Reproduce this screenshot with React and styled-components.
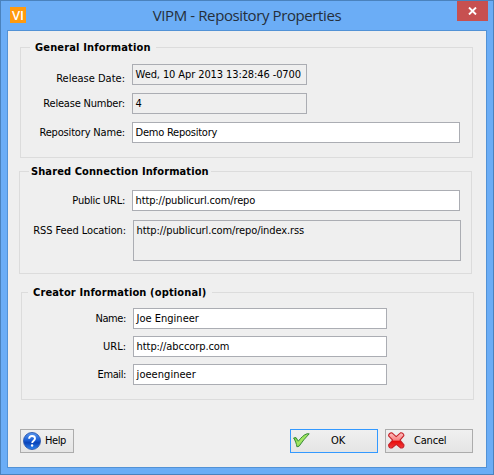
import React from "react";
import styled, { createGlobalStyle } from "styled-components";

const GlobalStyle = createGlobalStyle`
  * { box-sizing: border-box; }
  body { margin: 0; overflow: hidden; }
`;

const Window = styled.div`
  width: 494px;
  height: 475px;
  display: flex;
  flex-direction: column;
  padding: 0 6px 6px;
  background: #6badf6;
  border: 1px solid #4a82bd;
  color: #000;
  font: 11px/13px "DejaVu Sans Condensed", "DejaVu Sans", sans-serif;
  font-stretch: condensed;
`;

const TitleBar = styled.header`
  height: 29px;
  flex: none;
  display: flex;
  align-items: flex-start;
  justify-content: space-between;
`;

const AppBadge = styled.div`
  width: 16px;
  height: 16px;
  margin: 6px 0 0 3px;
  background: #ff9a0e;
  color: #fff;
  font: 600 13px/17px "Open Sans", sans-serif;
  text-align: center;
`;

const Title = styled.h1`
  margin: 4px 0 0 11px;
  color: #252f3b;
  font: 400 15px/21px "Open Sans", sans-serif;
  letter-spacing: ${(p) => p.$spacing}px;
  white-space: nowrap;
`;

const CloseButton = styled.button`
  width: 31px;
  height: 20px;
  margin-right: -1px;
  padding: 0;
  border: 0;
  background: #c75050;
  display: flex;
  align-items: center;
  justify-content: center;
`;

const Client = styled.main`
  flex: 1;
  display: flex;
  flex-direction: column;
  align-items: flex-start;
  border: 1px solid #5292d6;
  background: #efefef;
  padding: 16px 0 0 11px;
`;

const Group = styled.section`
  flex: none;
  width: 453px;
  height: ${(p) => p.$height}px;
  margin: ${(p) => p.$top}px 0 0 ${(p) => p.$left}px;
  border: 1px solid #dcdcdc;
`;

const Legend = styled.h2`
  width: ${(p) => p.$width}px;
  height: 14px;
  margin: -7px 0 0 ${(p) => p.$left}px;
  padding-left: ${(p) => p.$indent}px;
  background: #efefef;
  font: bold 11px/14px "DejaVu Sans Condensed", "DejaVu Sans", sans-serif;
  font-stretch: condensed;
  letter-spacing: ${(p) => p.$spacing || 0}px;
  white-space: nowrap;
`;

const Row = styled.div`
  display: flex;
  margin-top: ${(p) => p.$top}px;
`;

const Label = styled.label`
  width: ${(p) => p.$width}px;
  flex: none;
  padding: ${(p) => p.$drop || 4}px 1px 0 0;
  margin-right: 6px;
  text-align: right;
  letter-spacing: ${(p) => p.$spacing || 0}px;
  white-space: nowrap;
`;

const Field = styled.div`
  width: ${(p) => p.$width}px;
  height: ${(p) => p.$height || 21}px;
  padding: 3px 2px 3px 2.6px;
  border: 1px solid #abadb3;
  background: ${(p) => (p.$readOnly ? "#efefef" : "#fff")};
  letter-spacing: ${(p) => p.$spacing || 0}px;
  white-space: nowrap;
`;

const Footer = styled.footer`
  width: 453px;
  margin: 29px 0 0 1px;
  display: flex;
  gap: 7px;
`;

const Button = styled.button`
  width: ${(p) => p.$width}px;
  height: 24px;
  margin-right: ${(p) => p.$after || 0}px;
  padding: 0 0 1px 2px;
  display: flex;
  align-items: center;
  border: 1px solid ${(p) => (p.$primary ? "#3399ff" : "#acacac")};
  background: linear-gradient(#f0f0f0, #e5e5e5);
  color: #000;
  font: inherit;
  font-stretch: inherit;
`;

const Caption = styled.span`
  margin-left: ${(p) => p.$left}px;
  letter-spacing: ${(p) => p.$spacing || 0}px;
`;

const HelpIcon = () => (
  <svg width="18" height="18" viewBox="0 0 18 18">
    <defs>
      <linearGradient id="ball" x1="0" y1="0" x2="0" y2="1">
        <stop offset="0" stopColor="#5c9af0" />
        <stop offset="0.45" stopColor="#1b5fd6" />
        <stop offset="0.6" stopColor="#0a43b8" />
        <stop offset="1" stopColor="#2f86f2" />
      </linearGradient>
    </defs>
    <circle cx="9" cy="9" r="8.5" fill="url(#ball)" stroke="#2c58ae" strokeWidth="0.9" />
    <path d="M6.1 6.8C6.1 4.9 7.2 4 9 4s3 .9 3 2.5c0 2.2-2.8 2.2-2.8 4.5" fill="none" stroke="#fff" strokeWidth="1.9" />
    <circle cx="9.1" cy="13.5" r="1.2" fill="#fff" />
  </svg>
);

const CheckIcon = () => (
  <svg width="17" height="15" viewBox="0 0 17 15">
    <defs>
      <linearGradient id="leaf" x1="0" y1="0" x2="1" y2="1">
        <stop offset="0" stopColor="#53c52e" />
        <stop offset="0.5" stopColor="#a5e865" />
        <stop offset="1" stopColor="#4bb52b" />
      </linearGradient>
    </defs>
    <path d="M.6 5L3 4.6l2.3 3.6C8 4.6 11 1.6 14 .8h2.2C12.4 4.5 9 9 6.1 13.2l-2.2.6C3.4 10.6 2.3 7.5.6 5z" fill="url(#leaf)" stroke="#398b38" strokeWidth="1" strokeLinejoin="round" />
  </svg>
);

const CrossIcon = () => (
  <svg width="17" height="17" viewBox="0 0 17 17">
    <defs>
      <linearGradient id="ruby" x1="0" y1="0" x2="0" y2="1">
        <stop offset="0" stopColor="#ffc4c4" />
        <stop offset="0.48" stopColor="#f88080" />
        <stop offset="0.56" stopColor="#e80c0c" />
        <stop offset="1" stopColor="#f33c3c" />
      </linearGradient>
    </defs>
    <path d="M3.7.7L8.2 4.6 12.8.7c1.7-.1 3.2 1.3 3.1 3L12 8.2l4 4.7c0 1.7-1.4 3.1-3.2 3.1l-4.5-3.6L3.8 16C2 16 .6 14.6.6 12.9l4-4.7L.6 3.8C.7 2 2 .7 3.7.7z" fill="url(#ruby)" stroke="#c52028" strokeWidth="1.1" strokeLinejoin="round" />
  </svg>
);

export default function App() {
  return (
    <Window>
      <GlobalStyle />
      <TitleBar>
        <AppBadge>VI</AppBadge>
        <Title $spacing={-0.4}>VIPM - Repository Properties</Title>
        <CloseButton aria-label="Close">
          <svg width="9" height="8" viewBox="0 0 9 8">
            <path d="M1 .5l7 7M8 .5l-7 7" stroke="#fff" strokeWidth="1.9" />
          </svg>
        </CloseButton>
      </TitleBar>
      <Client>
        <Group $height={111} $top={0} $left={1}>
          <Legend $width={126} $left={9} $indent={5} $spacing={0.16}>General Information</Legend>
          <Row $top={9}>
            <Label $width={105} $drop={8}>Release Date:</Label>
            <Field $width={175} $readOnly $spacing={-0.1}>Wed, 10 Apr 2013 13:28:46 -0700</Field>
          </Row>
          <Row $top={8}>
            <Label $width={105} $spacing={-0.2}>Release Number:</Label>
            <Field $width={175} $readOnly>4</Field>
          </Row>
          <Row $top={8}>
            <Label $width={105} $spacing={-0.17}>Repository Name:</Label>
            <Field $width={328} $spacing={-0.24}>Demo Repository</Field>
          </Row>
        </Group>
        <Group $height={103} $top={13} $left={0}>
          <Legend $width={182} $left={9} $indent={2} $spacing={0.1}>Shared Connection Information</Legend>
          <Row $top={11}>
            <Label $width={106} $spacing={-0.25}>Public URL:</Label>
            <Field $width={328} $spacing={-0.14}>http://publicurl.com/repo</Field>
          </Row>
          <Row $top={9}>
            <Label $width={107} $spacing={-0.1}>RSS Feed Location:</Label>
            <Field $width={328} $height={41} $readOnly $spacing={-0.1}>http://publicurl.com/repo/index.rss</Field>
          </Row>
        </Group>
        <Group $height={108} $top={18} $left={2}>
          <Legend $width={184} $left={6} $indent={5} $spacing={0.13}>Creator Information (optional)</Legend>
          <Row $top={8}>
            <Label $width={105} $spacing={-0.4}>Name:</Label>
            <Field $width={254}>Joe Engineer</Field>
          </Row>
          <Row $top={7}>
            <Label $width={105}>URL:</Label>
            <Field $width={254} $spacing={-0.08}>http://abccorp.com</Field>
          </Row>
          <Row $top={7}>
            <Label $width={105} $spacing={-0.4}>Email:</Label>
            <Field $width={254} $spacing={0.04}>joeengineer</Field>
          </Row>
        </Group>
        <Footer>
          <Button $width={54} $after={209}>
            <HelpIcon />
            <Caption $left={4} $spacing={-0.4}>Help</Caption>
          </Button>
          <Button $width={88} $primary>
            <CheckIcon />
            <Caption $left={21}>OK</Caption>
          </Button>
          <Button $width={88}>
            <CrossIcon />
            <Caption $left={9} $spacing={-0.2}>Cancel</Caption>
          </Button>
        </Footer>
      </Client>
    </Window>
  );
}
